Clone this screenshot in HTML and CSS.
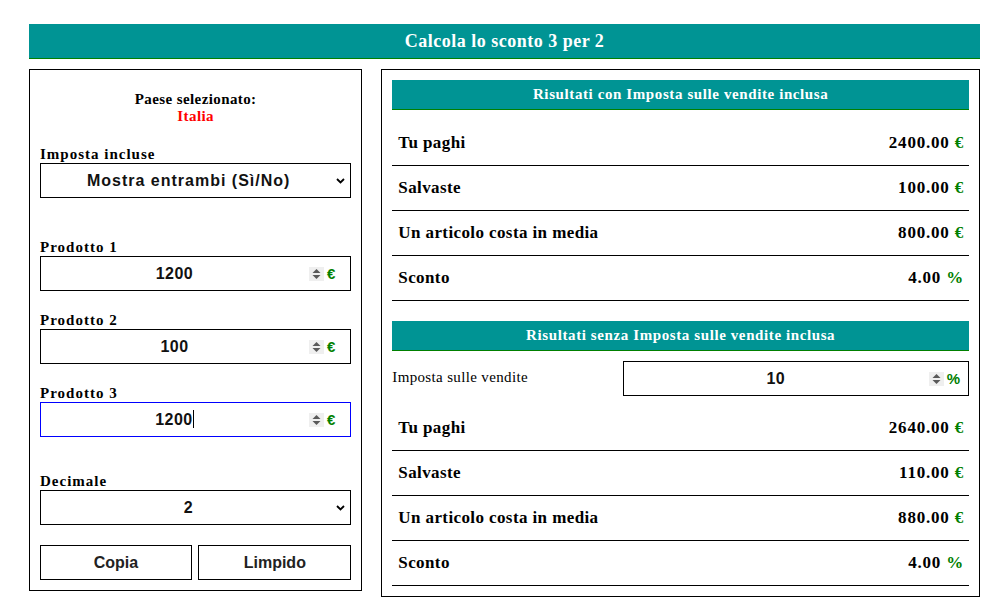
FILE: index.html
```html
<!DOCTYPE html>
<html lang="it">
<head>
<meta charset="utf-8">
<title>Calcola lo sconto 3 per 2</title>
<link rel="stylesheet" href="styles.css">
</head>
<body>
<div class="page">
  <h1 class="title">Calcola lo sconto 3 per 2</h1>
  <div class="columns">
    <div class="panel left">
      <div class="country">
        <div>Paese selezionato:</div>
        <div class="country-name">Italia</div>
      </div>
      <div class="group g-tax">
        <label class="lbl">Imposta incluse</label>
        <div class="field select-field">
          <span class="select-text">Mostra entrambi (Sì/No)</span>
          <svg class="chev" width="9" height="6" viewBox="0 0 9 6"><path d="M1 1 L4.5 4.5 L8 1" fill="none" stroke="#000" stroke-width="1.8"/></svg>
        </div>
      </div>
      <div class="group g-p1">
        <label class="lbl">Prodotto 1</label>
        <div class="field num-field">
          <span class="num-text">1200</span>
          <svg class="spin" width="15" height="14" viewBox="0 0 15 14"><rect width="15" height="14" fill="#efefef"/><path d="M3.5 6 L7.5 2 L11.5 6 Z M3.5 8 L7.5 12 L11.5 8 Z" fill="#5a5a5a"/></svg>
          <span class="unit">€</span>
        </div>
      </div>
      <div class="group g-p2">
        <label class="lbl">Prodotto 2</label>
        <div class="field num-field">
          <span class="num-text">100</span>
          <svg class="spin" width="15" height="14" viewBox="0 0 15 14"><rect width="15" height="14" fill="#efefef"/><path d="M3.5 6 L7.5 2 L11.5 6 Z M3.5 8 L7.5 12 L11.5 8 Z" fill="#5a5a5a"/></svg>
          <span class="unit">€</span>
        </div>
      </div>
      <div class="group g-p3">
        <label class="lbl">Prodotto 3</label>
        <div class="field num-field focused">
          <span class="num-text">1200<span class="caret"></span></span>
          <svg class="spin" width="15" height="14" viewBox="0 0 15 14"><rect width="15" height="14" fill="#efefef"/><path d="M3.5 6 L7.5 2 L11.5 6 Z M3.5 8 L7.5 12 L11.5 8 Z" fill="#5a5a5a"/></svg>
          <span class="unit">€</span>
        </div>
      </div>
      <div class="group g-dec">
        <label class="lbl">Decimale</label>
        <div class="field select-field">
          <span class="select-text">2</span>
          <svg class="chev" width="9" height="6" viewBox="0 0 9 6"><path d="M1 1 L4.5 4.5 L8 1" fill="none" stroke="#000" stroke-width="1.8"/></svg>
        </div>
      </div>
      <div class="buttons">
        <button class="btn">Copia</button>
        <button class="btn">Limpido</button>
      </div>
    </div>

    <div class="panel right">
      <div class="res-head">Risultati con Imposta sulle vendite inclusa</div>
      <div class="rows">
        <div class="row"><span>Tu paghi</span><span class="val">2400.00 <b class="g">€</b></span></div>
        <div class="row"><span>Salvaste</span><span class="val">100.00 <b class="g">€</b></span></div>
        <div class="row"><span>Un articolo costa in media</span><span class="val">800.00 <b class="g">€</b></span></div>
        <div class="row"><span>Sconto</span><span class="val">4.00 <b class="g">%</b></span></div>
      </div>
      <div class="res-head second">Risultati senza Imposta sulle vendite inclusa</div>
      <div class="tax-line">
        <span class="tax-lbl">Imposta sulle vendite</span>
        <div class="field num-field tax-field">
          <span class="num-text">10</span>
          <svg class="spin" width="15" height="14" viewBox="0 0 15 14"><rect width="15" height="14" fill="#efefef"/><path d="M3.5 6 L7.5 2 L11.5 6 Z M3.5 8 L7.5 12 L11.5 8 Z" fill="#5a5a5a"/></svg>
          <span class="unit">%</span>
        </div>
      </div>
      <div class="rows rows2">
        <div class="row"><span>Tu paghi</span><span class="val">2640.00 <b class="g">€</b></span></div>
        <div class="row"><span>Salvaste</span><span class="val">110.00 <b class="g">€</b></span></div>
        <div class="row"><span>Un articolo costa in media</span><span class="val">880.00 <b class="g">€</b></span></div>
        <div class="row"><span>Sconto</span><span class="val">4.00 <b class="g">%</b></span></div>
      </div>
    </div>
  </div>
</div>
</body>
</html>
```

FILE: styles.css
```css
* { box-sizing: border-box; }
html, body { margin: 0; padding: 0; background: #fff; }
body { font-family: "Liberation Serif", "Times New Roman", serif; color: #000; }

.page { padding: 24px 12px 0 29px; width: 992px; }

.title {
  margin: 0;
  height: 35px;
  background: #009494;
  border-bottom: 1px solid #008000;
  color: #fff;
  font-size: 18px;
  font-weight: bold;
  letter-spacing: 0.5px;
  text-align: center;
  line-height: 35px;
}

.columns { display: flex; gap: 19px; margin-top: 10px; align-items: flex-start; }

.panel { border: 1px solid #000; padding: 10px; }
.left { width: 334px; }
.right { width: 600px; }

.country { text-align: center; font-weight: bold; font-size: 15px; line-height: 17px; margin-top: 11px; letter-spacing: 0.4px; }
.country-name { color: #f00; }

.lbl { display: block; font-weight: bold; font-size: 15px; line-height: 17px; letter-spacing: 1px; }

.g-tax { margin-top: 21px; }
.g-p1 { margin-top: 41px; }
.g-p2 { margin-top: 21px; }
.g-p3 { margin-top: 21px; }
.g-dec { margin-top: 36px; }

.field {
  display: flex;
  align-items: center;
  height: 35px;
  border: 1px solid #000;
  font-family: "Liberation Sans", Arial, sans-serif;
  font-weight: bold;
  font-size: 16px;
}
.focused { border-color: #00f; }

.select-field { padding-right: 5px; }
.select-text { flex: 1; text-align: center; letter-spacing: 1px; color: #111; }
.chev { flex: none; }

.num-field { padding-right: 15px; }
.num-text { flex: 1; text-align: center; color: #111; letter-spacing: 0.5px; }
.caret { display: inline-block; width: 1px; height: 18px; background: #000; vertical-align: -3px; }
.spin { flex: none; margin-left: 1px; }
.unit { color: #008000; margin-left: 3px; font-size: 15px; }

.buttons { display: flex; justify-content: space-between; margin-top: 20px; }
.btn {
  width: 152px;
  height: 35px;
  background: #fff;
  border: 1px solid #000;
  font-family: "Liberation Sans", Arial, sans-serif;
  font-weight: bold;
  font-size: 16px;
  color: #222;
  padding: 0;
}
.btn + .btn { width: 153px; }

.res-head {
  height: 30px;
  background: #009494;
  border-bottom: 1px solid #008000;
  color: #fff;
  font-weight: bold;
  font-size: 15px;
  line-height: 29px;
  text-align: center;
  letter-spacing: 0.6px;
}
.second { margin-top: 20px; }

.rows { margin-top: 11px; }
.rows2 { margin-top: 10px; }
.row {
  display: flex;
  justify-content: space-between;
  align-items: center;
  height: 45px;
  border-bottom: 1px solid #000;
  padding: 0 5px 0 6px;
  font-weight: bold;
  font-size: 17px;
  letter-spacing: 0.4px;
}
.val { letter-spacing: 0.8px; }
.g { color: #008000; }

.tax-line { display: grid; grid-template-columns: 40% 60%; align-items: center; margin-top: 10px; }
.tax-lbl { font-size: 15px; letter-spacing: 0.35px; margin-top: -3px; }
.tax-field { height: 35px; padding-right: 8px; }
```
